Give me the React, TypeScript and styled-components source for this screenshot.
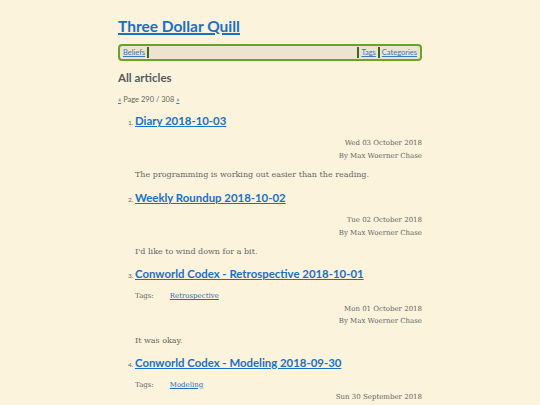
import React from 'react';
import styled, { createGlobalStyle } from 'styled-components';

const GlobalStyle = createGlobalStyle`
  html, body {
    margin: 0;
    padding: 0;
    background: #fcf3dc;
  }
  body {
    font-family: "DejaVu Serif", serif;
    color: #5a5a5a;
  }
`;

const Page = styled.div`
  width: 304px;
  margin: 0 auto;
  padding-top: 14px;
`;

const SiteTitle = styled.h1`
  margin: 0;
  font-family: Lato, "Open Sans", sans-serif;
  font-weight: 700;
  font-size: 15.5px;
  line-height: 24px;
  a {
    color: #1a6fc7;
    text-decoration: underline;
    text-decoration-thickness: 1.5px;
  }
`;

const Nav = styled.nav`
  margin-top: 6px;
  display: flex;
  align-items: stretch;
  height: 11px;
  border: 2px solid #69a32a;
  border-radius: 4px;
  background: #ece4d0;
  padding: 1px 2px;
  font-family: Lato, "Open Sans", sans-serif;
  font-size: 7.5px;
  line-height: 11px;
`;

const NavLink = styled.a`
  color: #3b78bd;
  text-decoration: underline;
  padding: 0 1px;
`;

const Sep = styled.span`
  width: 2px;
  background: #3c6a14;
  margin: 0 1px;
`;

const Spacer = styled.span`
  flex: 1;
`;

const Heading = styled.h2`
  margin: 9px 0 0;
  font-family: Lato, "Open Sans", sans-serif;
  font-weight: 700;
  font-size: 11.5px;
  line-height: 16px;
  color: #555b5e;
`;

const Pager = styled.div`
  margin-top: 9px;
  font-family: Lato, "Open Sans", sans-serif;
  font-size: 7.5px;
  line-height: 10px;
  color: #666;
  a {
    color: #3b78bd;
  }
`;

const List = styled.ol`
  margin: 8px 0 0;
  padding-left: 17px;
  font-family: Lato, "Open Sans", sans-serif;
  font-size: 6.5px;
  color: #666;
`;

const Item = styled.li`
  margin-bottom: 9px;
  &:nth-child(n + 3) {
    margin-top: -1px;
  }
`;

const ItemTitle = styled.a`
  font-family: Lato, "Open Sans", sans-serif;
  font-weight: 700;
  font-size: 11.4px;
  line-height: 16px;
  color: #1a6fc7;
  text-decoration: underline;
  text-decoration-thickness: 1.2px;
`;

const Meta = styled.div`
  margin-top: 8px;
  font-family: "DejaVu Serif", serif;
  font-size: 7px;
  line-height: 12.5px;
  color: #666;
`;

const Tags = styled.div`
  display: flex;
  gap: 16px;
  a {
    color: #2a6cb8;
  }
`;

const Byline = styled.div`
  text-align: right;
`;

const Summary = styled.p`
  margin: 7px 0 0;
  font-family: "DejaVu Serif", serif;
  font-size: 8px;
  line-height: 12px;
  color: #666;
`;

type Article = {
  title: string;
  date: string;
  tags?: string[];
  summary: string;
};

const articles: Article[] = [
  { title: 'Diary 2018-10-03', date: 'Wed 03 October 2018', summary: 'The programming is working out easier than the reading.' },
  { title: 'Weekly Roundup 2018-10-02', date: 'Tue 02 October 2018', summary: "I'd like to wind down for a bit." },
  { title: 'Conworld Codex - Retrospective 2018-10-01', date: 'Mon 01 October 2018', tags: ['Retrospective'], summary: 'It was okay.' },
  { title: 'Conworld Codex - Modeling 2018-09-30', date: 'Sun 30 September 2018', tags: ['Modeling'], summary: '' },
];

export default function App() {
  return (
    <>
      <GlobalStyle />
      <Page>
        <SiteTitle><a href="#">Three Dollar Quill</a></SiteTitle>
        <Nav>
          <NavLink href="#">Beliefs</NavLink>
          <Sep />
          <Spacer />
          <Sep />
          <NavLink href="#">Tags</NavLink>
          <Sep />
          <NavLink href="#">Categories</NavLink>
        </Nav>
        <Heading>All articles</Heading>
        <Pager><a href="#">«</a> Page 290 / 308 <a href="#">»</a></Pager>
        <List>
          {articles.map(a => (
            <Item key={a.title}>
              <ItemTitle href="#">{a.title}</ItemTitle>
              <Meta>
                {a.tags && (
                  <Tags>
                    <span>Tags:</span>
                    {a.tags.map(t => <a key={t} href="#">{t}</a>)}
                  </Tags>
                )}
                <Byline>{a.date}</Byline>
                <Byline>By Max Woerner Chase</Byline>
              </Meta>
              {a.summary && <Summary>{a.summary}</Summary>}
            </Item>
          ))}
        </List>
      </Page>
    </>
  );
}
